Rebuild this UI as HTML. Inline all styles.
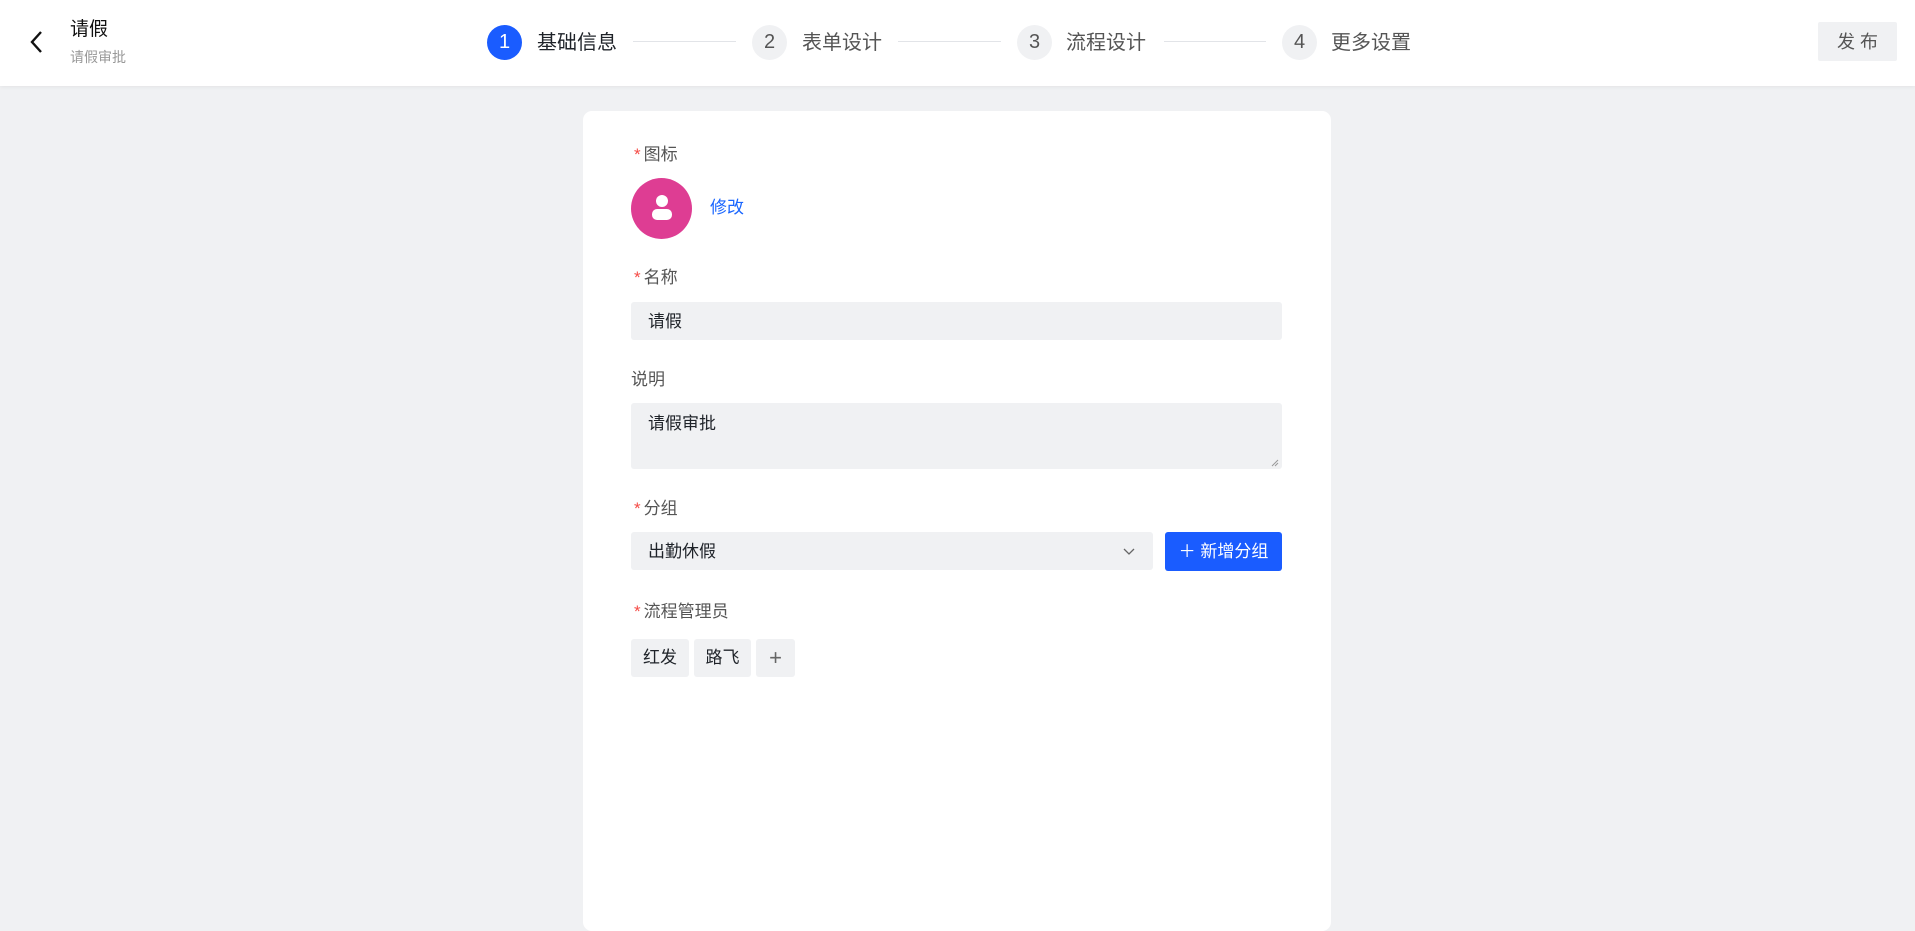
<!DOCTYPE html>
<html><head><meta charset="utf-8"><style>
*{box-sizing:border-box;margin:0;padding:0}
body{width:1915px;height:899px;background:#f0f1f3;font-family:"Liberation Sans","Noto Sans CJK SC",sans-serif;position:relative;overflow:hidden;color:#1f2329}
.abs{position:absolute}
.hdr{left:0;top:0;width:1915px;height:86px;background:#fff;box-shadow:0 1px 4px rgba(0,0,0,.06)}
.circ{width:35px;height:35px;border-radius:50%;background:#f0f1f3;color:#555;font-size:20px;line-height:35px;text-align:center;top:25px}
.st{top:30px;font-size:20px;line-height:26px;color:#555}
.ln{top:41px;height:1px;background:#e2e4e8}
.card{left:583px;top:111px;width:748px;height:820px;background:#fff;border-radius:9px}
.lbl{font-size:17px;color:#555;line-height:22px}
.lbl b{color:#f54a45;font-weight:normal;margin-right:3px}
.inp{background:#f0f1f3;border-radius:3px;font-size:17px;color:#1f2329;padding-left:17px}
.tag{top:639px;height:38px;background:#f0f1f3;border-radius:3px;font-size:17px;line-height:38px;text-align:center}
</style></head><body>
<div class="abs hdr"></div>
<svg class="abs" style="left:28px;top:30px" width="18" height="24" viewBox="0 0 18 24"><path d="M13 2 L4 12 L13 22" fill="none" stroke="#111" stroke-width="2.4"/></svg>
<div class="abs" style="left:70px;top:18px;font-size:19px;line-height:24px;color:#111">请假</div>
<div class="abs" style="left:70px;top:48px;font-size:14px;line-height:18px;color:#999">请假审批</div>
<div class="abs circ" style="left:487px;background:#1a5cff;color:#fff">1</div>
<div class="abs st" style="left:537px;color:#1f2329">基础信息</div>
<div class="abs ln" style="left:633px;width:103px"></div>
<div class="abs circ" style="left:752px">2</div>
<div class="abs st" style="left:802px">表单设计</div>
<div class="abs ln" style="left:898px;width:103px"></div>
<div class="abs circ" style="left:1017px">3</div>
<div class="abs st" style="left:1066px">流程设计</div>
<div class="abs ln" style="left:1164px;width:102px"></div>
<div class="abs circ" style="left:1282px">4</div>
<div class="abs st" style="left:1331px">更多设置</div>
<div class="abs" style="left:1818px;top:22px;width:79px;height:39px;background:#f0f1f3;border-radius:2px;font-size:18px;line-height:40px;text-align:center;color:#555">发 布</div>

<div class="abs card"></div>
<div class="abs lbl" style="left:634px;top:144px"><b>*</b>图标</div>
<div class="abs" style="left:631px;top:178px;width:61px;height:61px;border-radius:50%;background:#de3d93"></div>
<svg class="abs" style="left:648px;top:192px" width="28" height="32" viewBox="0 0 28 32"><circle cx="14" cy="9" r="6" fill="#fff"/><rect x="4" y="17" width="20" height="11" rx="5" fill="#fff"/></svg>
<div class="abs" style="left:710px;top:197px;font-size:17px;color:#1a66ff;line-height:22px">修改</div>

<div class="abs lbl" style="left:634px;top:267px"><b>*</b>名称</div>
<div class="abs inp" style="left:631px;top:302px;width:651px;height:38px;line-height:39px">请假</div>

<div class="abs lbl" style="left:631px;top:369px">说明</div>
<div class="abs inp" style="left:631px;top:403px;width:651px;height:66px;padding-top:10px;line-height:22px">请假审批</div>
<svg class="abs" style="left:1271px;top:459px" width="8" height="8"><path d="M1 7L7 1M4 7L7 4" stroke="#999" stroke-width="1"/></svg>

<div class="abs lbl" style="left:634px;top:498px"><b>*</b>分组</div>
<div class="abs inp" style="left:631px;top:532px;width:522px;height:38px;line-height:39px">出勤休假</div>
<svg class="abs" style="left:1123px;top:548px" width="12" height="8"><path d="M1 1L6 6L11 1" fill="none" stroke="#666" stroke-width="1.3"/></svg>
<div class="abs" style="left:1165px;top:532px;width:117px;height:39px;background:#1a5cff;border-radius:3px;color:#fff;font-size:17px;line-height:40px;text-align:center">＋ 新增分组</div>

<div class="abs lbl" style="left:634px;top:601px"><b>*</b>流程管理员</div>
<div class="abs tag" style="left:631px;width:58px">红发</div>
<div class="abs tag" style="left:694px;width:57px">路飞</div>
<div class="abs tag" style="left:756px;width:39px;color:#666;font-size:22px">+</div>
</body></html>
